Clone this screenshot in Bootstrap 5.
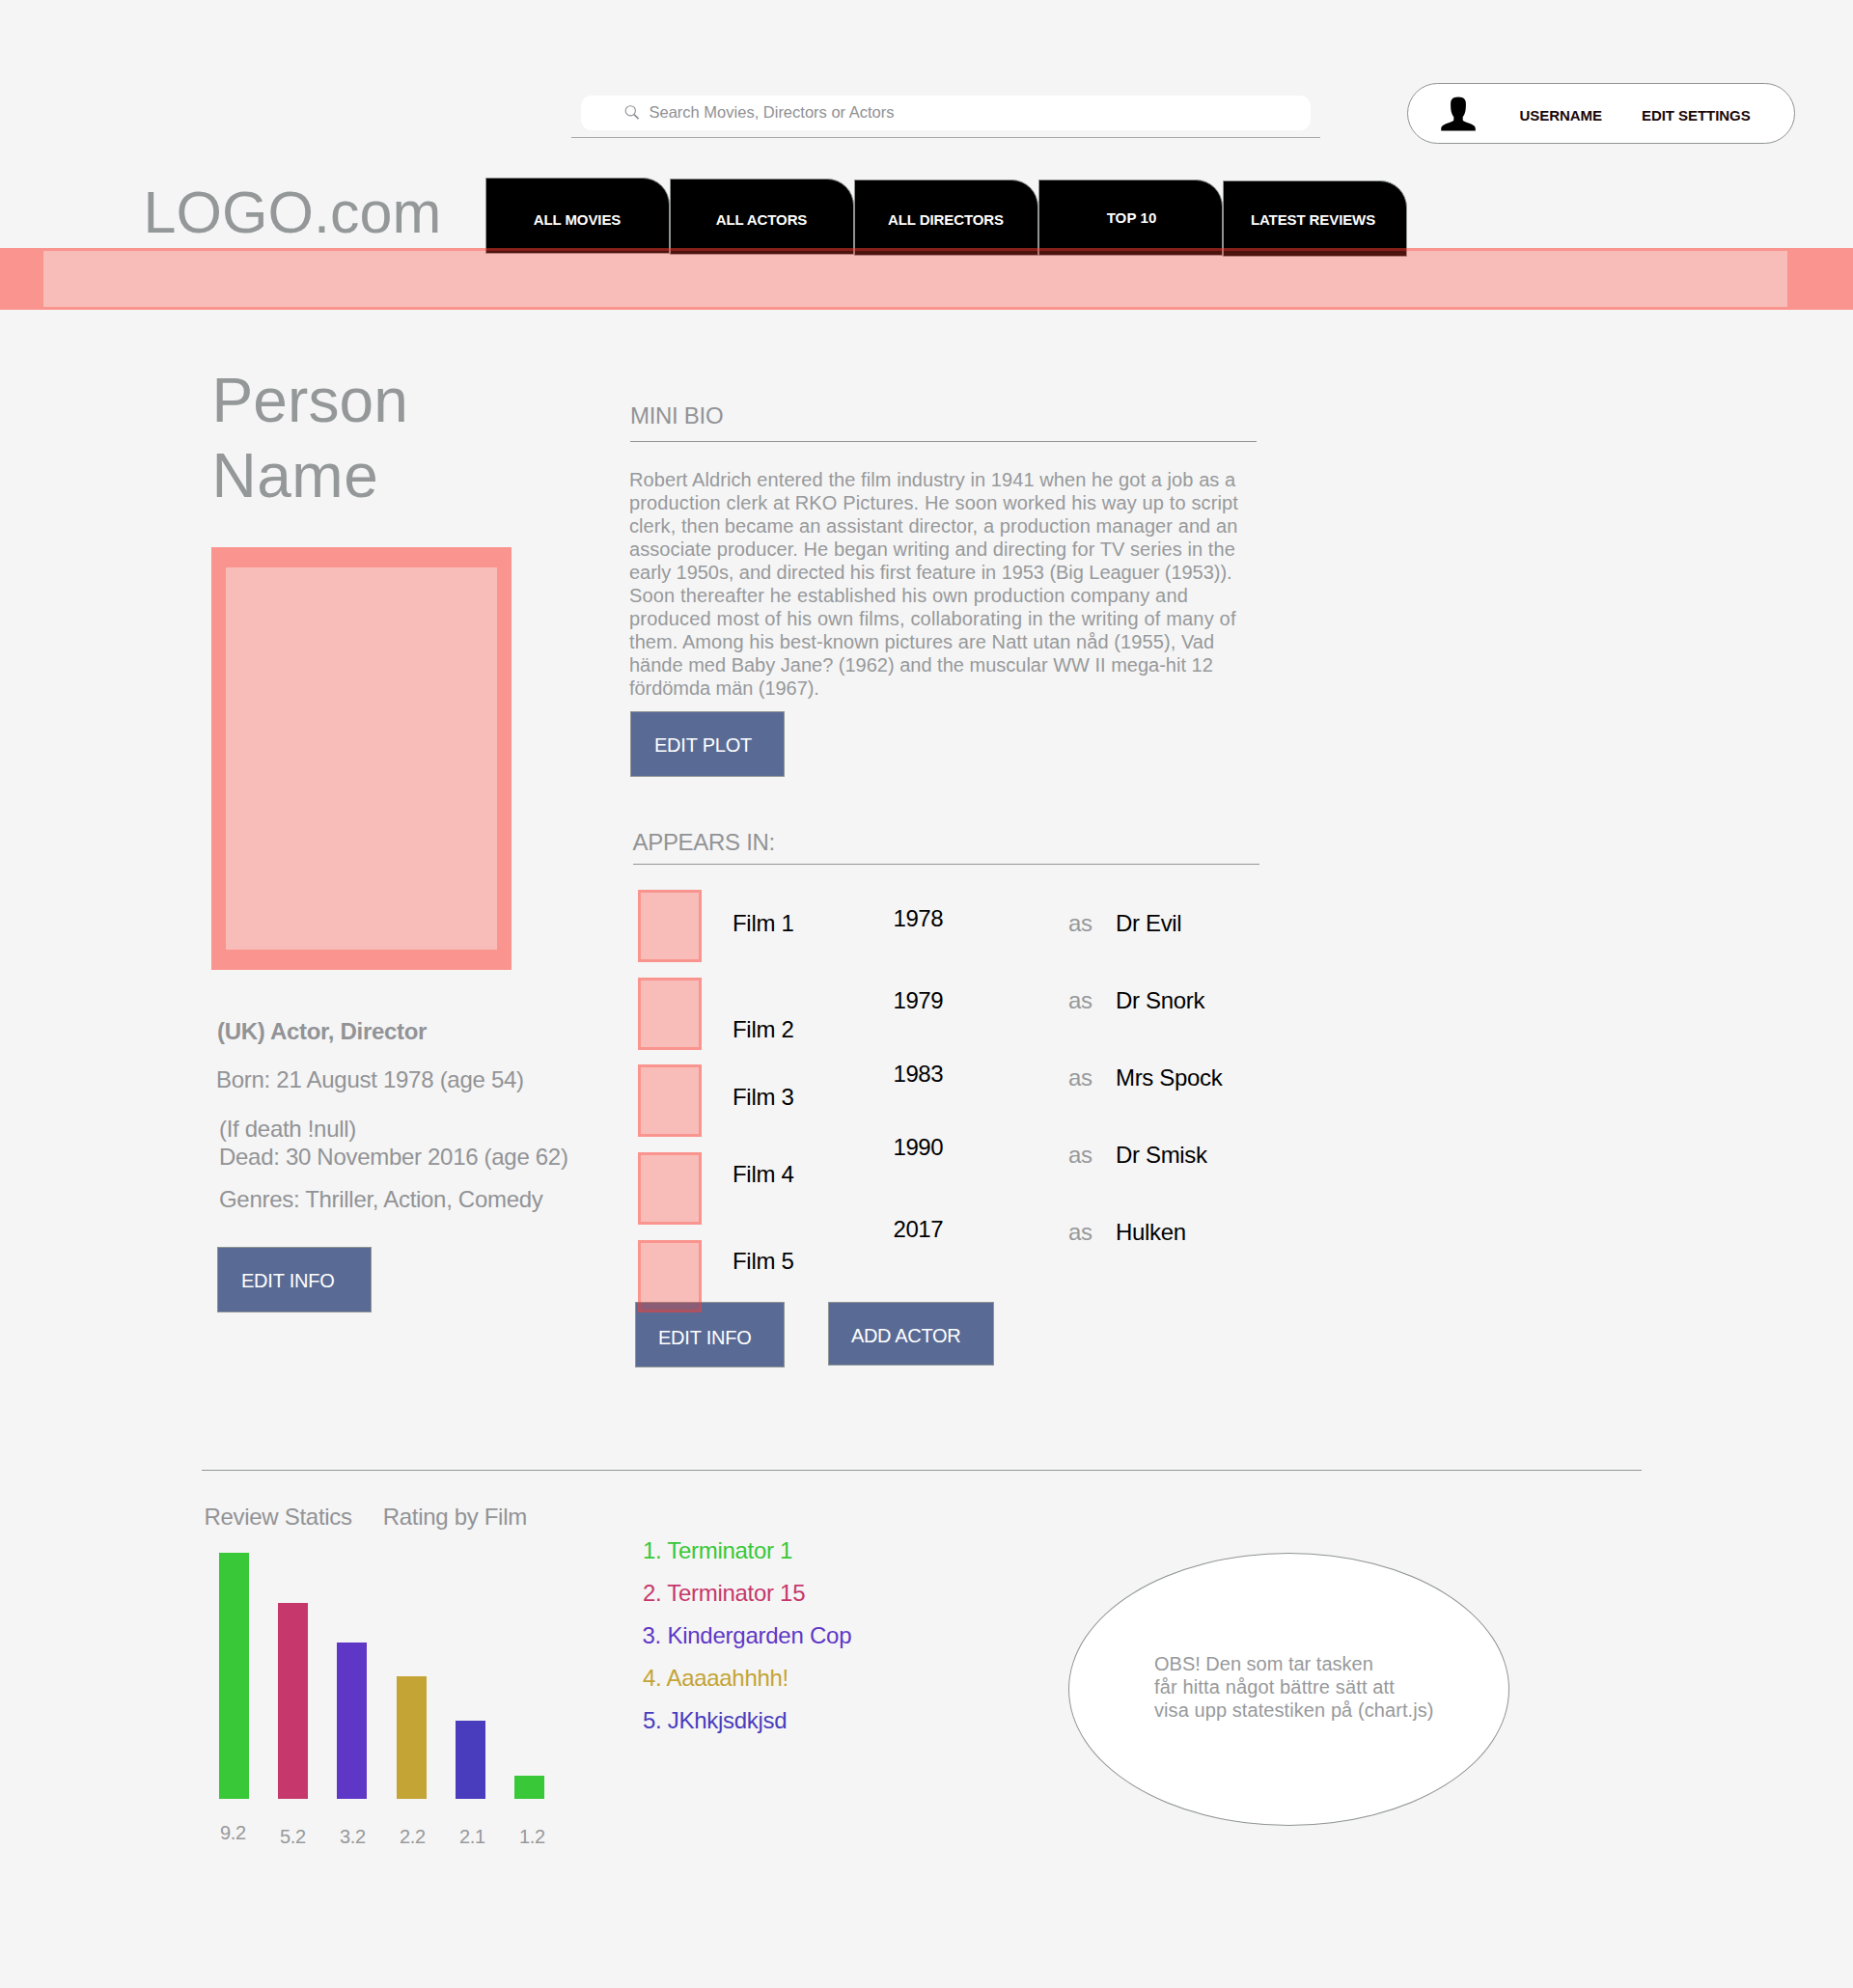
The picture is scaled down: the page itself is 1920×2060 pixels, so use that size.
<!DOCTYPE html>
<html lang="en">
<head>
<meta charset="utf-8">
<meta name="viewport" content="width=device-width, initial-scale=1">
<title>Person Name – LOGO.com</title>
<link href="https://cdn.jsdelivr.net/npm/bootstrap@5.3.0/dist/css/bootstrap.min.css" rel="stylesheet">
<style>
  body { background:#f5f5f5; color:#929396; font-family:"Liberation Sans", Arial, sans-serif; font-size:24px; line-height:28px; letter-spacing:-.3px; min-height:2060px; width:1920px; overflow-x:hidden; }
  p, h1, h2, ul, ol { margin:0; padding:0; font-weight:400; font-size:inherit; line-height:inherit; white-space:nowrap; }
  ul, ol { list-style:none; }
  .ls-a { letter-spacing:.08px; } .ls-b { letter-spacing:.14px; } .ls-c { letter-spacing:-.05px; } .ls-d { letter-spacing:.18px; } .ls-e { letter-spacing:0; }

  /* header */
  .site-header { height:257px; padding-top:86px; }
  .top-line { height:63px; }
  .search-wrap { width:776px; height:44px; margin:13px 90px 0 592px; padding:0 10px; border-bottom:1px solid #a6a9a9; }
  .search-box { height:36px; background:#fff; border-radius:11px; padding-left:45px; font-size:16.5px; line-height:20px; letter-spacing:0; color:#8f9194; padding-bottom:2px; }
  .search-box svg { width:16px; height:16px; margin-right:9.5px; }
  .user-pill { width:402px; height:63px; background:#fff; border:1px solid #8f9394; border-radius:32px; font-size:15px; line-height:20px; letter-spacing:-.05px; font-weight:700; color:#1c0707; padding-left:34px; }
  .user-pill svg { width:36px; height:36px; margin-right:45.5px; }
  .user-pill span { padding-top:4px; }
  .user-pill span + span { margin-left:41px; }
  .brand { width:354.5px; margin:35px 0 0 148.5px; font-size:61px; line-height:72px; letter-spacing:.05px; color:#949899; text-decoration:none; white-space:nowrap; }
  .site-tabs { margin-top:35px; }
  .tab-item { width:191px; height:79px; background:#000; border:1px solid #8f9394; border-radius:0 28px 0 0; color:#fff; font-size:15px; line-height:20px; letter-spacing:-.1px; font-weight:700; padding:33px 1px 0 0; text-align:center; white-space:nowrap; text-decoration:none; }
  .tab-item:nth-child(2) { margin-top:1px; padding-top:32px; }
  .tab-item:nth-child(3) { margin-top:2px; padding-top:31px; }
  .tab-item:nth-child(4) { margin-top:2px; padding:29px 0 0 2px; letter-spacing:.1px; }
  .tab-item:nth-child(5) { margin-top:3px; padding:30px 4px 0 0; }
  .redbox { background:rgba(255,59,48,.3); background-clip:padding-box; border:3px solid rgba(255,59,48,.52); }
  .hero-strip { height:64.4px; border-width:3px 68px 3px 45px; z-index:1; }

  /* profile */
  .profile-side { width:433px; margin-left:219px; padding-top:54.6px; }
  .person-title { font-size:64px; line-height:78px; letter-spacing:.5px; color:#949899; padding-left:.5px; }
  .person-title span { letter-spacing:.1px; }
  .portrait { width:311px; height:438px; margin-top:35px; border-width:21px 15px; }
  .facts { margin-top:50px; padding-left:6px; }
  .facts p:nth-child(2) { margin-top:22px; margin-left:-1px; letter-spacing:-.28px; }
  .facts p:nth-child(3) { margin-top:23px; padding-left:2px; }
  .facts p:nth-child(4) { margin-top:1px; padding-left:2px; }
  .facts p:nth-child(5) { margin-top:16px; padding-left:2px; }
  .action-btn { --bs-btn-color:#fff; background:#596b95; border:1px solid #8f9494; border-radius:0; color:#fff; font-size:20px; line-height:24px; letter-spacing:-.22px; text-align:left; white-space:nowrap; padding:2px 0 0 24px; height:68px; width:160px; }
  .facts + .action-btn { margin:35px 0 0 6px; }
  .detail { padding-top:95.6px; }
  .detail h2 { padding-left:1px; }
  .rule { height:1px; width:649px; margin:12px 0 0 1px; background:#929697; }
  .bio { font-size:20px; line-height:24px; color:#97999b; margin-top:27px; }
  .bio + .action-btn { margin:12px 0 0 1px; }
  .appears h2 { padding:54px 0 0 3.5px; }
  .appears .rule { margin:8px 0 0 4px; }
  .film-cols { color:#000; height:453px; padding-left:9px; }
  .thumbs { width:98px; padding-top:26px; }
  .thumb { width:66px; height:75px; margin-bottom:15.75px; position:relative; z-index:1; }
  .films { width:166.5px; padding-top:47px; }
  .films li:nth-child(2) { margin-top:82px; }
  .films li:nth-child(3) { margin-top:42px; }
  .films li:nth-child(4) { margin-top:52px; }
  .films li:nth-child(5) { margin-top:62px; }
  .years { width:181.5px; padding-top:42px; letter-spacing:-.45px; }
  .years li:nth-child(2), .years li:nth-child(5) { margin-top:57px; }
  .years li:nth-child(3), .years li:nth-child(4) { margin-top:48px; }
  .as-col, .roles { padding-top:47px; }
  .as-col { width:49px; color:#97999b; }
  .roles { letter-spacing:-.33px; }
  .as-col li + li, .roles li + li { margin-top:52px; }
  .btn-row { padding-left:6px; gap:45px; }
  .btn-row .action-btn:first-child { width:155px; padding:6px 0 0 23px; }
  .btn-row .action-btn:last-child { width:172px; height:66px; padding:4px 0 0 23px; letter-spacing:-.33px; }

  /* statistics */
  .stats { margin:106px 0 0 209px; }
  .stats > .rule { width:1492px; margin:0; }
  .ratings { width:457px; }
  .chart-head { padding:34px 0 0 2.5px; gap:32px; }
  .bar-row { height:254.7px; gap:30.2px; margin:23px 0 0 18px; }
  .bar { width:31px; }
  .bar-labels { margin:23px 0 0 19px; font-size:20px; line-height:24px; letter-spacing:-.4px; color:#97999b; }
  .bar-labels span { width:62px; padding-top:4px; }
  .bar-labels span:first-child { padding-top:0; }
  .film-list { width:441px; padding-top:69px; }
  .film-list li + li { margin-top:16px; }
  .film-list li:nth-child(3) { margin-left:-.5px; letter-spacing:-.25px; }
  .c1 { color:#38c838; } .c2 { color:#c6386b; } .c3 { color:#5f37c6; } .c4 { color:#c4a435; } .c5 { color:#493cbd; }
  .b1 { background:#38c838; } .b2 { background:#c6386b; } .b3 { background:#5f37c6; } .b4 { background:#c4a435; } .b5 { background:#493cbd; }
  .note { width:457px; height:283px; margin-top:85px; border:1px solid #8f9394; border-radius:50%; background:#fff; font-size:20px; line-height:24px; color:#97999b; padding:102px 0 0 88px; }
</style>
</head>
<body>
<header class="site-header">
  <div class="top-line d-flex align-items-start">
    <div class="search-wrap"><div class="search-box d-flex align-items-center">
      <svg viewBox="0 0 16 16" fill="none" stroke="#8f9194" stroke-width="1.1"><circle cx="6.3" cy="6.8" r="5.1"/><path d="M10 10.6 14.6 15.2" stroke-width="1.8"/></svg>
      <span>Search Movies, Directors or Actors</span>
    </div></div>
    <div class="user-pill d-flex align-items-center">
      <svg viewBox="0 0 36 36"><path d="M14 .9C16 .2 20 .2 22 .9 25 1.9 26 4.500 25.900 8c0 4-.3 6.500-.9 8.500-.6 2-1.500 3.600-2.300 4.600v3.400c1.200 2 5.800 2.600 9.500 4.400 2.800 1.300 3.600 2.400 3.600 4.800v1.800H.2v-1.800c0-2.400.8-3.500 3.600-4.800 3.700-1.800 8.300-2.400 9.500-4.400v-3.400c-.8-1-1.700-2.600-2.300-4.600-.6-2-.9-4.500-.9-8.500C10 4.500 11 1.900 14 .9Z"/></svg>
      <span>USERNAME</span><span>EDIT SETTINGS</span>
    </div>
  </div>
  <div class="d-flex align-items-start">
    <a class="brand" href="#">LOGO.com</a>
    <nav class="site-tabs d-flex align-items-start">
      <a class="tab-item" href="#">ALL MOVIES</a>
      <a class="tab-item" href="#">ALL ACTORS</a>
      <a class="tab-item" href="#">ALL DIRECTORS</a>
      <a class="tab-item" href="#">TOP 10</a>
      <a class="tab-item" href="#">LATEST REVIEWS</a>
    </nav>
  </div>
</header>
<div class="hero-strip redbox position-relative"></div>

<main>
  <div class="d-flex align-items-start">
    <aside class="profile-side">
      <h1 class="person-title"><span>Person</span><br>Name</h1>
      <div class="portrait redbox"></div>
      <div class="facts">
        <p class="fw-bold">(UK) Actor, Director</p>
        <p>Born: 21 August 1978 (age 54)</p>
        <p>(If death !null)</p>
        <p>Dead: 30 November 2016 (age 62)</p>
        <p>Genres: Thriller, Action, Comedy</p>
      </div>
      <button type="button" class="btn action-btn">EDIT INFO</button>
    </aside>

    <div class="detail">
      <section>
        <h2>MINI BIO</h2>
        <div class="rule"></div>
        <p class="bio"><span class="ls-a">Robert Aldrich entered the film industry in 1941 when he got a job as a</span><br>
        <span class="ls-b">production clerk at RKO Pictures. He soon worked his way up to script</span><br>
        <span class="ls-a">clerk, then became an assistant director, a production manager and an</span><br>
        <span class="ls-a">associate producer. He began writing and directing for TV series in the</span><br>
        <span class="ls-c">early 1950s, and directed his first feature in 1953 (Big Leaguer (1953)).</span><br>
        <span class="ls-b">Soon thereafter he established his own production company and</span><br>
        <span class="ls-d">produced most of his own films, collaborating in the writing of many of</span><br>
        <span class="ls-a">them. Among his best-known pictures are Natt utan nåd (1955), Vad</span><br>
        <span class="ls-e">hände med Baby Jane? (1962) and the muscular WW II mega-hit 12</span><br>
        <span class="ls-c">fördömda män (1967).</span></p>
        <button type="button" class="btn action-btn">EDIT PLOT</button>
      </section>

      <section class="appears">
        <h2>APPEARS IN:</h2>
        <div class="rule"></div>
        <div class="film-cols d-flex">
          <ul class="thumbs"><li class="thumb redbox"></li><li class="thumb redbox"></li><li class="thumb redbox"></li><li class="thumb redbox"></li><li class="thumb redbox"></li></ul>
          <ul class="films"><li>Film 1</li><li>Film 2</li><li>Film 3</li><li>Film 4</li><li>Film 5</li></ul>
          <ul class="years"><li>1978</li><li>1979</li><li>1983</li><li>1990</li><li>2017</li></ul>
          <ul class="as-col"><li>as</li><li>as</li><li>as</li><li>as</li><li>as</li></ul>
          <ul class="roles"><li>Dr Evil</li><li>Dr Snork</li><li>Mrs Spock</li><li>Dr Smisk</li><li>Hulken</li></ul>
        </div>
        <div class="btn-row d-flex align-items-start">
          <button type="button" class="btn action-btn">EDIT INFO</button>
          <button type="button" class="btn action-btn">ADD ACTOR</button>
        </div>
      </section>
    </div>
  </div>

  <section class="stats">
    <div class="rule"></div>
    <div class="d-flex align-items-start">
      <div class="ratings">
        <div class="chart-head d-flex"><h2>Review Statics</h2><h2>Rating by Film</h2></div>
        <div class="bar-row d-flex align-items-end">
          <div class="bar b1" style="height:100%"></div>
          <div class="bar b2" style="height:79.6%"></div>
          <div class="bar b3" style="height:63.5%"></div>
          <div class="bar b4" style="height:49.9%"></div>
          <div class="bar b5" style="height:31.7%"></div>
          <div class="bar b1" style="height:9.4%"></div>
        </div>
        <div class="bar-labels d-flex"><span>9.2</span><span>5.2</span><span>3.2</span><span>2.2</span><span>2.1</span><span>1.2</span></div>
      </div>
      <ol class="film-list">
        <li class="c1">1. Terminator 1</li>
        <li class="c2">2. Terminator 15</li>
        <li class="c3">3. Kindergarden Cop</li>
        <li class="c4">4. Aaaaahhhh!</li>
        <li class="c5">5. JKhkjsdkjsd</li>
      </ol>
      <p class="note"><span class="ls-e">OBS! Den som tar tasken</span><br><span class="ls-b">får hitta något bättre sätt att</span><br><span class="ls-a">visa upp statestiken på (chart.js)</span></p>
    </div>
  </section>
</main>
<script src="https://cdn.jsdelivr.net/npm/bootstrap@5.3.0/dist/js/bootstrap.bundle.min.js"></script>
</body>
</html>
